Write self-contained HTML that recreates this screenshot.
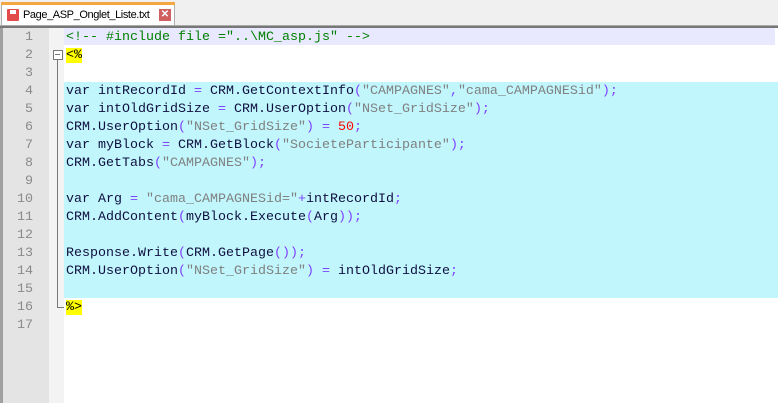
<!DOCTYPE html>
<html><head><style>
body{margin:0;width:778px;height:403px;overflow:hidden;background:#f0f0f0;position:relative;font-family:"Liberation Mono",monospace}
.tab{position:absolute;left:1px;top:2px;width:174px;height:23px;background:#fff;border:1px solid #b0b0b0;border-bottom:none;box-sizing:border-box}
.tab .top{position:absolute;left:-1px;right:-1px;top:-1px;height:3px;background:#f4a640}
.tab .t{position:absolute;left:21px;top:6px;font:11px "Liberation Sans",sans-serif;color:#000;letter-spacing:-0.4px;white-space:nowrap}
.ic{position:absolute;left:5px;top:6px;width:12px;height:12px;background:#e34a4a;border-radius:1px}
.ic:after{content:"";position:absolute;left:3px;top:1px;width:6px;height:4px;background:#fff}
.x{position:absolute;left:157px;top:6px;width:12px;height:12px;background:#d06060;color:#fff;font:bold 10px/12px "Liberation Sans";text-align:center}
.bar{position:absolute;left:0;top:25px;width:778px;height:3px;background:#777;border-top:1px solid #aaa}
.ed{position:absolute;left:0;top:28px;width:778px;height:375px;background:#fff}
.lb{position:absolute;left:0;top:0;width:3px;height:375px;background:#a0a0a0}
.ln{position:absolute;left:3px;top:0;width:46px;height:375px;background:#e4e4e4}
.fm{position:absolute;left:49px;top:0;width:15px;height:375px;background:#f3f3f3}
.row{position:absolute;left:0;height:18px;width:778px;font-size:13.33px;line-height:18px;white-space:pre}
.n{position:absolute;left:3px;width:30px;text-align:right;color:#8a8a8a}
.c{position:absolute;left:66px;color:#101040}
.s{color:#808080}.p{color:#8040ff}.num{color:#ff0000}.g{color:#008000}
.y{background:#ffff00;color:#000}
.rows{position:absolute;left:0;top:29px}
</style></head><body>
<div class="tab"><div class="top"></div><div class="ic"></div><div class="t">Page_ASP_Onglet_Liste.txt</div><div class="x">✕</div></div>
<div class="bar"></div>
<div class="ed">
<div class="lb"></div><div class="ln"></div><div class="fm"></div>
<div style="position:absolute;left:64px;top:0;width:711px;height:17px;background:#e8e8ff"></div>
<div style="position:absolute;left:64px;top:54px;width:714px;height:216px;background:#c0f6fc"></div>
<div style="position:absolute;left:53px;top:22px;width:8px;height:8px;border:1px solid #777;background:#fff"></div>
<div style="position:absolute;left:55px;top:26px;width:5px;height:1px;background:#777"></div>
<div style="position:absolute;left:57px;top:32px;width:1px;height:248px;background:#777"></div>
<div style="position:absolute;left:57px;top:279px;width:7px;height:1px;background:#777"></div>
</div>
<div class="rows">
<div class="row" style="top:0"><span class="n">1</span><span class="c g">&lt;!-- #include file ="..\MC_asp.js" --&gt;</span></div>
<div class="row" style="top:18px"><span class="n">2</span><span class="c"><span class="y">&lt;%</span></span></div>
<div class="row" style="top:36px"><span class="n">3</span></div>
<div class="row" style="top:54px"><span class="n">4</span><span class="c">var intRecordId <span class="p">=</span> CRM.GetContextInfo<span class="p">(</span><span class="s">"CAMPAGNES"</span><span class="p">,</span><span class="s">"cama_CAMPAGNESid"</span><span class="p">);</span></span></div>
<div class="row" style="top:72px"><span class="n">5</span><span class="c">var intOldGridSize <span class="p">=</span> CRM.UserOption<span class="p">(</span><span class="s">"NSet_GridSize"</span><span class="p">);</span></span></div>
<div class="row" style="top:90px"><span class="n">6</span><span class="c">CRM.UserOption<span class="p">(</span><span class="s">"NSet_GridSize"</span><span class="p">) =</span> <span class="num">50</span><span class="p">;</span></span></div>
<div class="row" style="top:108px"><span class="n">7</span><span class="c">var myBlock <span class="p">=</span> CRM.GetBlock<span class="p">(</span><span class="s">"SocieteParticipante"</span><span class="p">);</span></span></div>
<div class="row" style="top:126px"><span class="n">8</span><span class="c">CRM.GetTabs<span class="p">(</span><span class="s">"CAMPAGNES"</span><span class="p">);</span></span></div>
<div class="row" style="top:144px"><span class="n">9</span></div>
<div class="row" style="top:162px"><span class="n">10</span><span class="c">var Arg <span class="p">=</span> <span class="s">"cama_CAMPAGNESid="</span><span class="p">+</span>intRecordId<span class="p">;</span></span></div>
<div class="row" style="top:180px"><span class="n">11</span><span class="c">CRM.AddContent<span class="p">(</span>myBlock.Execute<span class="p">(</span>Arg<span class="p">));</span></span></div>
<div class="row" style="top:198px"><span class="n">12</span></div>
<div class="row" style="top:216px"><span class="n">13</span><span class="c">Response.Write<span class="p">(</span>CRM.GetPage<span class="p">());</span></span></div>
<div class="row" style="top:234px"><span class="n">14</span><span class="c">CRM.UserOption<span class="p">(</span><span class="s">"NSet_GridSize"</span><span class="p">) =</span> intOldGridSize<span class="p">;</span></span></div>
<div class="row" style="top:252px"><span class="n">15</span></div>
<div class="row" style="top:270px"><span class="n">16</span><span class="c"><span class="y">%&gt;</span></span></div>
<div class="row" style="top:288px"><span class="n">17</span></div>
</div>
</body></html>
